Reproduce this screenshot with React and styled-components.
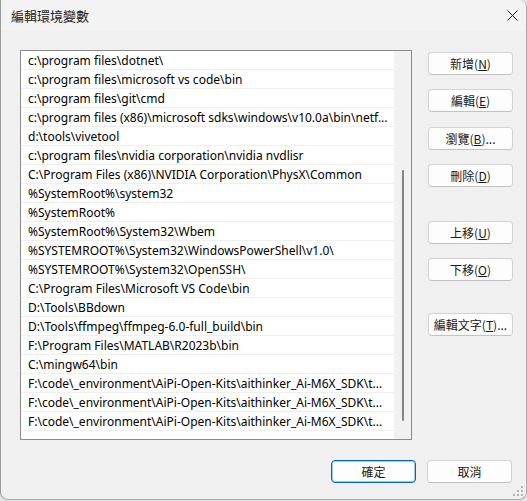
import React from "react";
import styled, { createGlobalStyle } from "styled-components";

const GlobalStyle = createGlobalStyle`
  html, body {
    margin: 0;
    padding: 0;
    background: #e4e4e4;
  }
`;

const Window = styled.div`
  position: relative;
  box-sizing: border-box;
  width: 527px;
  height: 500px;
  background: #f0f0f0;
  border: 1px solid #a9a9a9;
  border-top: none;
  border-left-color: #9c9c9c;
  border-radius: 0 8px 8px 8px;
  overflow: hidden;
  display: flex;
  flex-direction: column;
  font-family: "Noto Sans", "Noto Sans CJK TC", sans-serif;
  color: #1a1a1a;
`;

const TitleBar = styled.div`
  height: 31px;
  flex-shrink: 0;
  display: flex;
  align-items: center;
  justify-content: space-between;
  padding: 0 8px 0 10px;
  background: #f3f3f3;
`;

const Title = styled.span`
  font-family: "Noto Sans CJK TC", sans-serif;
  font-size: 13px;
  color: #1a1a1a;
`;

const CloseIcon = styled.svg`
  width: 11px;
  height: 11px;
  margin-top: -1px;
`;

const Content = styled.div`
  display: flex;
  gap: 16px;
  padding: 19px 0 0 19px;
`;

const ListBox = styled.div`
  box-sizing: border-box;
  width: 392px;
  height: 390px;
  border: 1px solid #8a8a8a;
  background: #fff;
  display: flex;
`;

const Rows = styled.div`
  flex: 1;
  min-width: 0;
  display: flex;
  flex-direction: column;
`;

const Row = styled.div`
  box-sizing: border-box;
  height: 19px;
  flex-shrink: 0;
  padding-left: 7px;
  border-bottom: 1px solid #efefef;
  font-size: 12px;
  line-height: 20px;
  white-space: nowrap;
  overflow: hidden;
  color: #000;
`;

const ScrollTrack = styled.div`
  width: 17px;
  background: #f1f1f1;
  display: flex;
  flex-direction: column;
  align-items: center;
  padding-top: 119px;
  box-sizing: border-box;
`;

const ScrollThumb = styled.div`
  width: 2px;
  height: 251px;
  border-radius: 1px;
  background: #858585;
`;

const ButtonColumn = styled.div`
  display: flex;
  flex-direction: column;
  padding-top: 2px;
`;

const Button = styled.button`
  box-sizing: border-box;
  width: 85px;
  height: 23px;
  margin-top: ${(p) => p.$gap || 0}px;
  padding: 0;
  background: #fdfdfd;
  border: 1px solid ${(p) => (p.$primary ? "#0067c0" : "#d3d3d3")};
  border-bottom-color: ${(p) => (p.$primary ? "#0067c0" : "#c2c2c2")};
  box-shadow: ${(p) => (p.$primary ? "inset 0 0 0 1px rgba(0, 103, 192, 0.35)" : "none")};
  border-radius: 4px;
  font-family: "Noto Sans CJK TC", "Noto Sans", sans-serif;
  font-size: 12px;
  line-height: 19px;
  color: #1a1a1a;
  text-align: center;

  u {
    text-underline-offset: 1px;
  }
`;

const Footer = styled.div`
  display: flex;
  justify-content: flex-end;
  gap: 11px;
  padding: 20px 14px 0 0;
`;

const Grip = styled.svg`
  position: absolute;
  right: 3px;
  bottom: 3px;
  width: 10px;
  height: 10px;
`;

const paths = [
  "c:\\program files\\dotnet\\",
  "c:\\program files\\microsoft vs code\\bin",
  "c:\\program files\\git\\cmd",
  "c:\\program files (x86)\\microsoft sdks\\windows\\v10.0a\\bin\\netf...",
  "d:\\tools\\vivetool",
  "c:\\program files\\nvidia corporation\\nvidia nvdlisr",
  "C:\\Program Files (x86)\\NVIDIA Corporation\\PhysX\\Common",
  "%SystemRoot%\\system32",
  "%SystemRoot%",
  "%SystemRoot%\\System32\\Wbem",
  "%SYSTEMROOT%\\System32\\WindowsPowerShell\\v1.0\\",
  "%SYSTEMROOT%\\System32\\OpenSSH\\",
  "C:\\Program Files\\Microsoft VS Code\\bin",
  "D:\\Tools\\BBdown",
  "D:\\Tools\\ffmpeg\\ffmpeg-6.0-full_build\\bin",
  "F:\\Program Files\\MATLAB\\R2023b\\bin",
  "C:\\mingw64\\bin",
  "F:\\code\\_environment\\AiPi-Open-Kits\\aithinker_Ai-M6X_SDK\\t...",
  "F:\\code\\_environment\\AiPi-Open-Kits\\aithinker_Ai-M6X_SDK\\t...",
  "F:\\code\\_environment\\AiPi-Open-Kits\\aithinker_Ai-M6X_SDK\\t...",
];

const sideButtons = [
  { label: "新增", key: "N", gap: 0 },
  { label: "編輯", key: "E", gap: 14 },
  { label: "瀏覽", key: "B", gap: 15, dots: true },
  { label: "刪除", key: "D", gap: 14 },
  { label: "上移", key: "U", gap: 34 },
  { label: "下移", key: "O", gap: 14 },
  { label: "編輯文字", key: "T", gap: 32, dots: true },
];

export default function App() {
  return (
    <>
      <GlobalStyle />
      <Window>
        <TitleBar>
          <Title>編輯環境變數</Title>
          <CloseIcon viewBox="0 0 11 11">
            <path d="M0.5 0.5 L10.5 10.5 M10.5 0.5 L0.5 10.5" stroke="#1a1a1a" strokeWidth="1" />
          </CloseIcon>
        </TitleBar>
        <Content>
          <ListBox>
            <Rows>
              {paths.map((p, i) => (
                <Row key={i}>{p}</Row>
              ))}
            </Rows>
            <ScrollTrack>
              <ScrollThumb />
            </ScrollTrack>
          </ListBox>
          <ButtonColumn>
            {sideButtons.map((b) => (
              <Button key={b.key} $gap={b.gap}>
                {b.label}(<u>{b.key}</u>){b.dots ? "..." : ""}
              </Button>
            ))}
          </ButtonColumn>
        </Content>
        <Footer>
          <Button $primary>確定</Button>
          <Button>取消</Button>
        </Footer>
        <Grip viewBox="0 0 10 10">
          <rect x="8" y="0" width="2" height="2" fill="#b5b5b5" />
          <rect x="4" y="4" width="2" height="2" fill="#b5b5b5" />
          <rect x="8" y="4" width="2" height="2" fill="#b5b5b5" />
          <rect x="0" y="8" width="2" height="2" fill="#b5b5b5" />
          <rect x="4" y="8" width="2" height="2" fill="#b5b5b5" />
          <rect x="8" y="8" width="2" height="2" fill="#b5b5b5" />
        </Grip>
      </Window>
    </>
  );
}
